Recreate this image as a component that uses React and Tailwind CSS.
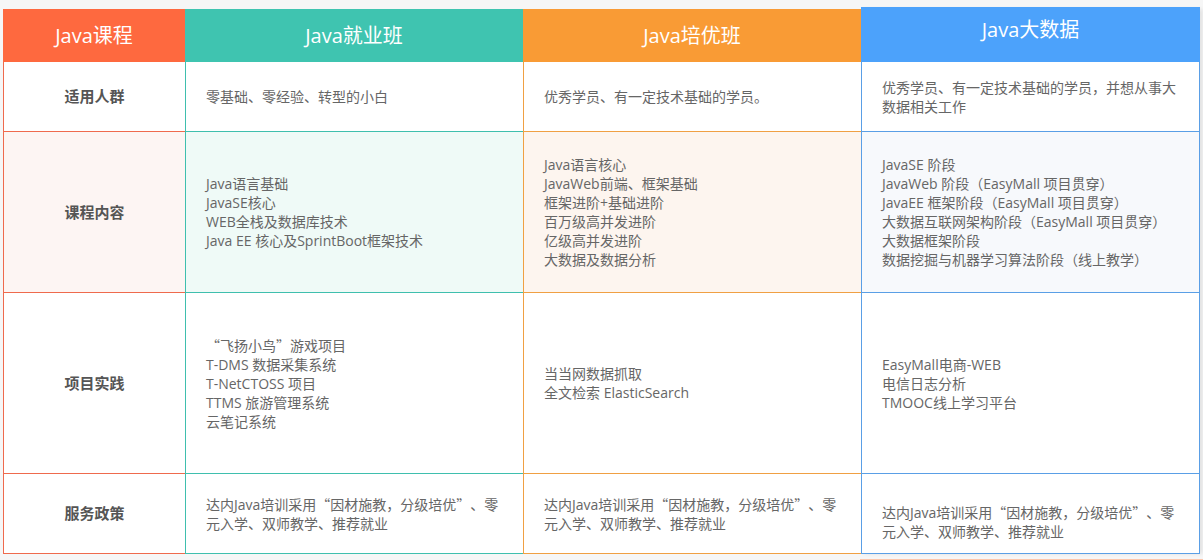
import React from 'react';

const font = { fontFamily: '"Open Sans", "Noto Sans CJK SC", sans-serif' };

const rowHeights = ['h-[70px]', 'h-[161px]', 'h-[181px]', 'h-[80px]'];

const labels = ['适用人群', '课程内容', '项目实践', '服务政策'];

const policy = '达内Java培训采用“因材施教，分级培优”、零元入学、双师教学、推荐就业';

const columns = [
  {
    title: 'Java就业班',
    width: 'w-[338px]',
    header: 'bg-[#3fc4b0] h-[53px] items-center',
    border: 'border-[#3fbfae]',
    tint: 'bg-[#effaf7]',
    cells: [
      ['零基础、零经验、转型的小白'],
      ['Java语言基础', 'JavaSE核心', 'WEB全栈及数据库技术', 'Java EE 核心及SprintBoot框架技术'],
      ['“飞扬小鸟”游戏项目', 'T-DMS 数据采集系统', 'T-NetCTOSS 项目', 'TTMS 旅游管理系统', '云笔记系统'],
      [policy],
    ],
  },
  {
    title: 'Java培优班',
    width: 'w-[338px]',
    header: 'bg-[#f99b35] h-[53px] items-center',
    border: 'border-[#f0a043]',
    tint: 'bg-[#fdf5ef]',
    cells: [
      ['优秀学员、有一定技术基础的学员。'],
      ['Java语言核心', 'JavaWeb前端、框架基础', '框架进阶+基础进阶', '百万级高并发进阶', '亿级高并发进阶', '大数据及数据分析'],
      ['当当网数据抓取', '全文检索 ElasticSearch'],
      [policy],
    ],
  },
  {
    title: 'Java大数据',
    width: 'w-[339px]',
    header: 'bg-[#4ca2fb] h-[55px] items-start pt-[8px] -mt-[2px]',
    border: 'border-[#5a9fe6]',
    tint: 'bg-[#f7f9fc]',
    last: true,
    cells: [
      ['优秀学员、有一定技术基础的学员，并想从事大数据相关工作'],
      ['JavaSE 阶段', 'JavaWeb 阶段（EasyMall 项目贯穿）', 'JavaEE 框架阶段（EasyMall 项目贯穿）', '大数据互联网架构阶段（EasyMall 项目贯穿）', '大数据框架阶段', '数据挖掘与机器学习算法阶段（线上教学）'],
      ['EasyMall电商-WEB', '电信日志分析', 'TMOOC线上学习平台'],
      [policy],
    ],
  },
];

// curly quotes render full width, like the CJK font does
function Line({ text }) {
  const parts = text.split(/([“”])/);
  return (
    <div>
      {parts.map((p, i) =>
        p === '“' || p === '”' ? (
          <span key={i} className="inline-block w-[14px] text-center" style={{ fontFamily: '"Noto Sans CJK SC", sans-serif' }}>
            {p}
          </span>
        ) : (
          <React.Fragment key={i}>{p}</React.Fragment>
        )
      )}
    </div>
  );
}

function Column({ col }) {
  return (
    <div className={`${col.width} flex flex-col ${col.last ? 'shadow-[3px_0_4px_rgba(0,0,0,0.08)]' : ''}`}>
      <div className={`flex justify-center text-white text-[20px] ${col.header}`}>{col.title}</div>
      {col.cells.map((lines, i) => (
        <div
          key={i}
          className={`${rowHeights[i]} flex items-center border-l border-b ${col.last ? 'border-r' : ''} ${col.border} ${i === 1 ? col.tint : 'bg-white'} pl-[20px] pr-[18px] ${col.last && i === 3 ? 'pt-[16px]' : ''}`}
        >
          <div className="text-[14px] leading-[19px] text-[#666]">
            {lines.map((l) => (
              <Line key={l} text={l} />
            ))}
          </div>
        </div>
      ))}
    </div>
  );
}

export default function App() {
  return (
    <div className="w-[1203px] h-[560px] bg-[#f6f6f6] overflow-hidden" style={font}>
      <div className="flex items-start pt-[9px] pl-[3px]">
        <div className="w-[182px] flex flex-col">
          <div className="h-[53px] bg-[#fe693f] flex items-center justify-center text-white text-[20px]">Java课程</div>
          {labels.map((l, i) => (
            <div
              key={l}
              className={`${rowHeights[i]} flex items-center justify-center border-l border-b border-[#ef6a4d] ${i === 1 ? 'bg-[#fdf5f3]' : 'bg-white'} text-[15px] font-bold text-[#555]`}
            >
              {l}
            </div>
          ))}
        </div>
        {columns.map((c) => (
          <Column key={c.title} col={c} />
        ))}
      </div>
      <div className="flex pt-[5px]">
        <div className="w-[860px]" />
        <div className="flex-1 h-[4px] bg-[#fcc6ab]" />
      </div>
    </div>
  );
}
